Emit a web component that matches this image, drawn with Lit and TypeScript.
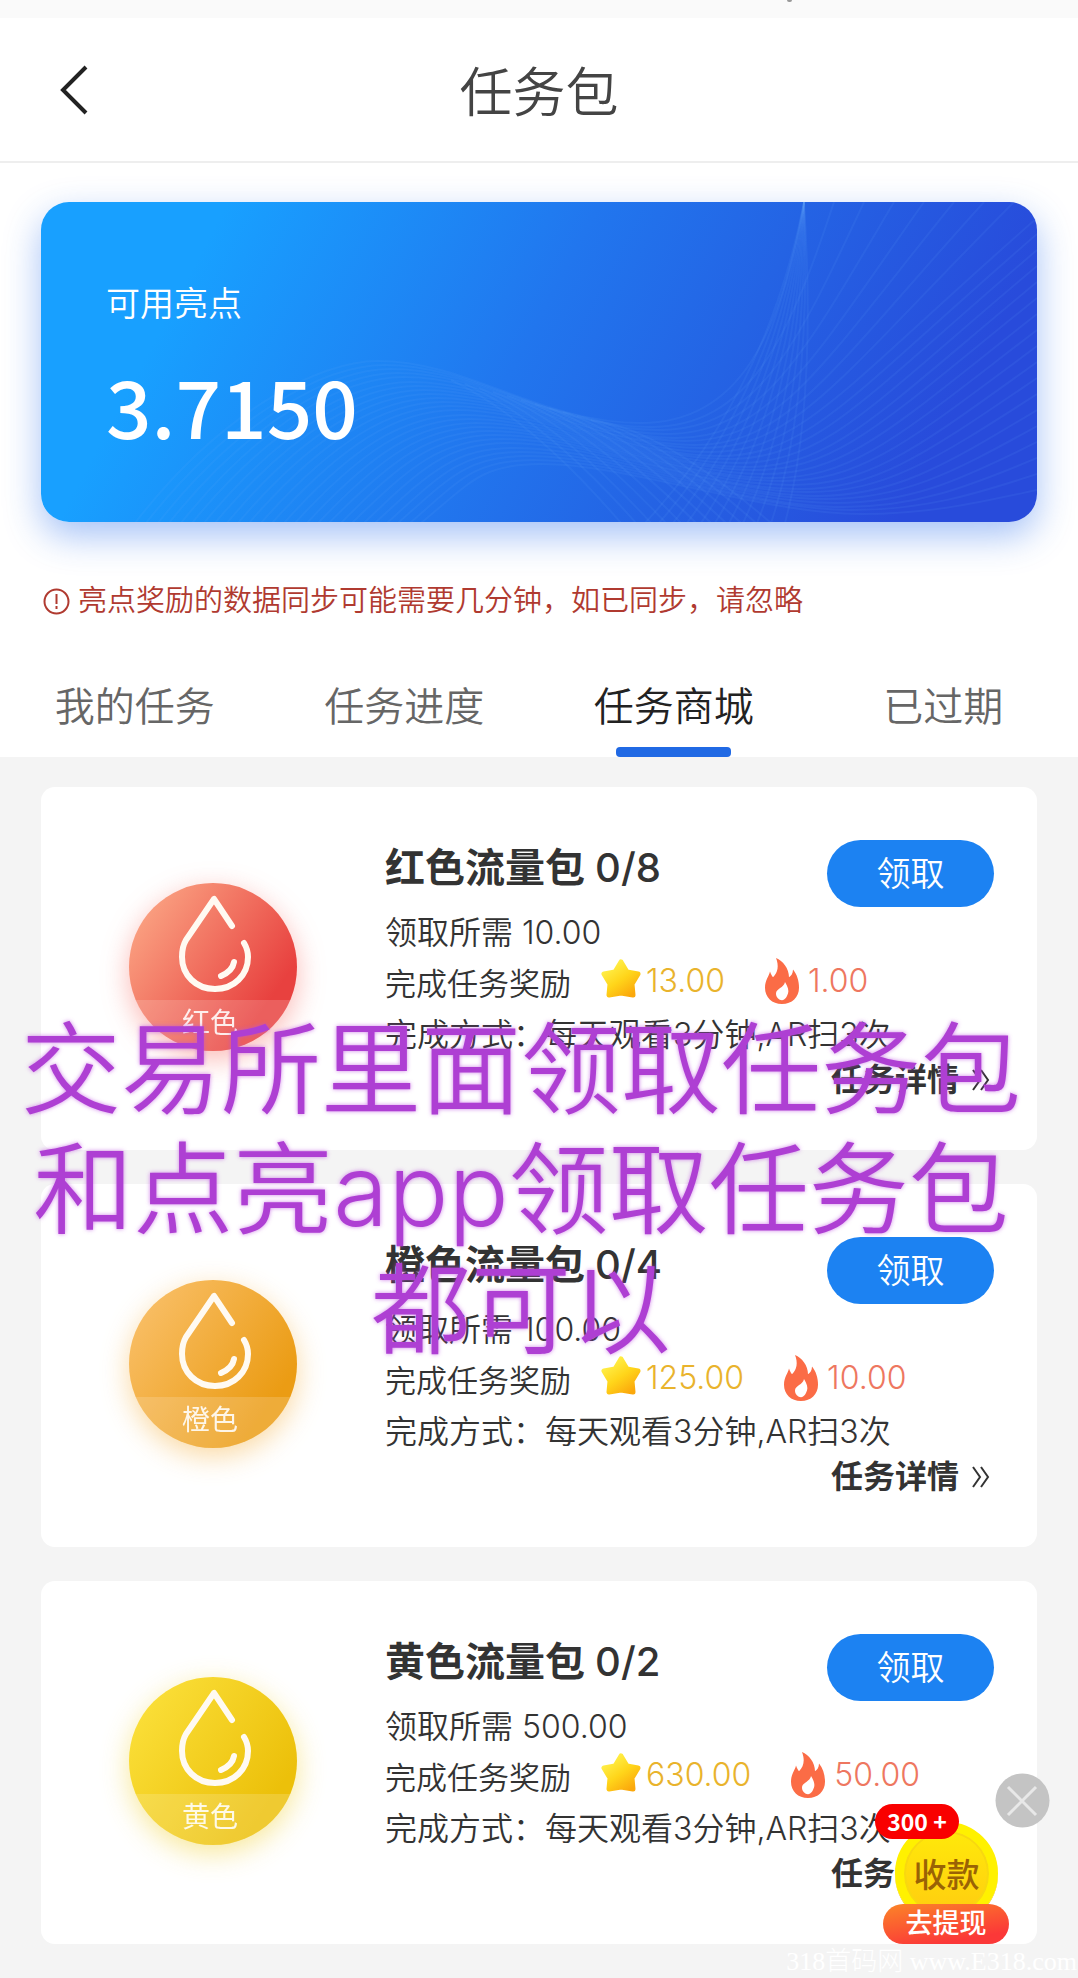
import { LitElement, html, css, svg } from "lit";
import { customElement, property, state } from "lit/decorators.js";
import { classMap } from "lit/directives/class-map.js";

interface TaskPack {
  id: string;
  color: string;
  progress: string;
  cost: string;
  stars: string;
  heat: string;
}

const PACKS: TaskPack[] = [
  { id: "red", color: "红色", progress: "0/8", cost: "10.00", stars: "13.00", heat: "1.00" },
  { id: "orange", color: "橙色", progress: "0/4", cost: "100.00", stars: "125.00", heat: "10.00" },
  { id: "yellow", color: "黄色", progress: "0/2", cost: "500.00", stars: "630.00", heat: "50.00" },
];

const TABS = ["我的任务", "任务进度", "任务商城", "已过期"];

const base = css`
  * {
    box-sizing: border-box;
  }
  button {
    margin: 0;
    padding: 0;
    border: 0;
    background: none;
    font: inherit;
    color: inherit;
    cursor: pointer;
  }
  a {
    color: inherit;
    text-decoration: none;
  }
  svg {
    display: block;
    flex: none;
  }
`;

/** Blue balance card with a fan of fine wave lines behind the amount. */
@customElement("balance-card")
export class BalanceCard extends LitElement {
  @property() amount = "";

  static styles = [
    base,
    css`
      :host {
        display: block;
      }
      .card {
        position: relative;
        height: 320px;
        padding: 78px 65px 0;
        border-radius: 28px;
        overflow: hidden;
        color: #fff;
        background: linear-gradient(118deg, #18a0ff 16%, #2176ee 48%, #2463e4 66%, #284bdb 88%);
      }
      .shade {
        border-radius: 28px;
        box-shadow: 0 14px 36px rgba(40, 110, 235, 0.42);
      }
      .waves {
        position: absolute;
        inset: 0;
        width: 100%;
        height: 100%;
      }
      .label,
      .amount {
        position: relative;
        margin: 0;
      }
      .label {
        font-size: 34px;
        line-height: 48px;
        font-weight: 350;
      }
      .amount {
        margin-top: 26px;
        font-family: "Noto Sans CJK SC", sans-serif;
        font-size: 80px;
        line-height: 100px;
        font-weight: 500;
      }
    `,
  ];

  private waves() {
    const n = 26;
    const mix = (a: number, b: number, t: number) => Math.round(a + (b - a) * t);
    const sweeps = Array.from({ length: n }, (_, i) => {
      const t = i / (n - 1);
      const hx = mix(337, 500, t);
      const hy = mix(159, 262, t);
      const vx = mix(600, 820, t);
      const vy = mix(221, 312, t);
      const ex = Math.min(996, 763 + i * 30);
      const ey = Math.max(0, i - 7) * 16;
      return `M${mix(94, 380, t)} 321 C${mix(180, 430, t)} ${mix(210, 280, t)} ${hx - 60} ${hy} ${hx} ${hy} C${hx + 90} ${hy} ${vx - 100} ${vy} ${vx} ${vy} C${vx + mix(100, 70, t)} ${vy} ${mix(740, 940, t)} ${mix(130, 300, t)} ${ex} ${ey}`;
    });
    const falls = Array.from(
      { length: 11 },
      (_, i) => `M${410 + i * 14} ${178 + i * 4} Q${490 + i * 13} ${216 + i} ${580 + i * 15} 321`
    );
    const risers = Array.from({ length: 11 }, (_, i) => `M${604 + i * 14} 321 Q${726 + i * 5} ${190 + i} 763 0`);
    return [...sweeps, ...falls, ...risers];
  }

  render() {
    return html`<div class="shade">
      <section class="card">
        <svg class="waves" viewBox="0 0 996 320" preserveAspectRatio="none" aria-hidden="true">
          ${this.waves().map((d) => svg`<path d=${d} fill="none" stroke="#6fb0ff" stroke-opacity=".09" stroke-width="2"/>`)}
        </svg>
        <p class="label">可用亮点</p>
        <p class="amount">${this.amount}</p>
      </section>
    </div>`;
  }
}

/** One traffic pack: coloured drop badge, costs, rewards and actions. */
@customElement("task-pack")
export class TaskPackCard extends LitElement {
  @property({ attribute: false }) pack!: TaskPack;

  static styles = [
    base,
    css`
      :host {
        display: block;
      }
      .card {
        display: flex;
        gap: 88px;
        min-height: 363px;
        padding: 53px 43px 0 88px;
        border-radius: 14px;
        background: #fff;
      }
      .badge {
        flex: none;
        width: 168px;
        height: 168px;
        margin-top: 43px;
        border-radius: 50%;
        overflow: hidden;
        display: flex;
        flex-direction: column;
        color: #fff;
      }
      .glow {
        flex: none;
        align-self: flex-start;
      }
      .red .badge {
        background: linear-gradient(125deg, #fba584 8%, #e8413f 78%);
      }
      .orange .badge {
        background: linear-gradient(125deg, #f9bf68 8%, #eb9c14 80%);
      }
      .yellow .badge {
        background: linear-gradient(125deg, #fbe03a 8%, #ecc00a 80%);
      }
      .red .glow {
        filter: drop-shadow(0 8px 14px rgba(245, 80, 70, 0.4));
      }
      .orange .glow {
        filter: drop-shadow(0 8px 14px rgba(245, 170, 50, 0.45));
      }
      .yellow .glow {
        filter: drop-shadow(0 8px 14px rgba(240, 205, 30, 0.45));
      }
      .tone {
        flex: 1;
        padding-right: 6px;
        font-size: 28px;
        line-height: 46px;
        text-align: center;
        color: rgba(255, 255, 255, 0.88);
        background: rgba(255, 255, 255, 0.16);
      }
      .body {
        flex: 1;
        min-width: 0;
        color: #333;
        font-size: 32px;
        line-height: 51px;
        font-weight: 350;
      }
      .head {
        display: flex;
        justify-content: space-between;
        align-items: flex-start;
        height: 67px;
      }
      .title {
        margin: 0;
        font-size: 40px;
        line-height: 56px;
        font-weight: 600;
      }
      .count {
        font-weight: 500;
      }
      .claim {
        width: 167px;
        height: 67px;
        border-radius: 34px;
        background: #1c82f2;
        color: #fff;
        font-size: 34px;
      }
      .line {
        margin: 0;
        height: 51px;
        white-space: nowrap;
      }
      .method {
        font-size: 31px;
      }
      .rewards {
        display: flex;
        align-items: flex-start;
      }
      .rewards .label {
        font-size: 31px;
      }
      .star {
        margin: 0 4px 0 29px;
      }
      .flame {
        margin: 0 9px 0 40px;
      }
      .stars,
      .heat {
        font-weight: 300;
        line-height: 46px;
      }
      .stars {
        color: #e9b32c;
      }
      .heat {
        color: #ee7760;
      }
      .more {
        display: flex;
        justify-content: flex-end;
        align-items: center;
        gap: 13px;
        padding-right: 4px;
        line-height: 40px;
        font-weight: 600;
      }
    `,
  ];

  render() {
    const p = this.pack;
    return html`<article class="card ${p.id}">
      <div class="glow">
        <div class="badge">
          <svg width="168" height="117" viewBox="0 0 168 117" fill="none" stroke="#fffaf2" stroke-width="6" stroke-linecap="round" stroke-linejoin="round" aria-hidden="true">
            <path d="M103 43 85 16 57 57C54 62 53 67 53 74c0 18 14 32 33 32s33-14 33-32c0-5-1-9-4-14" />
            <path d="M105 79c-1 6-6 11-13 14" />
          </svg>
          <span class="tone">${p.color}</span>
        </div>
      </div>
      <div class="body">
        <div class="head">
          <h2 class="title">${p.color}流量包 <span class="count">${p.progress}</span></h2>
          <button class="claim" type="button">领取</button>
        </div>
        <p class="line">领取所需 ${p.cost}</p>
        <p class="line rewards">
          <span class="label">完成任务奖励</span>
          <svg class="star" width="42" height="42" viewBox="0 0 42 42" aria-hidden="true">
            <defs>
              <linearGradient id="gold" x1=".15" y1=".1" x2=".8" y2="1">
                <stop offset="0" stop-color="#fff04a" />
                <stop offset=".5" stop-color="#ffd51a" />
                <stop offset="1" stop-color="#fba80c" />
              </linearGradient>
            </defs>
            <path d="M21 4 27 14 38 16 32 26 33 37 21 35 9 37 10 26 4 16 15 14Z" fill="url(#gold)" stroke="url(#gold)" stroke-width="5" stroke-linejoin="round" />
          </svg>
          <span class="stars">${p.stars}</span>
          <svg class="flame" width="34" height="46" viewBox="0 0 34 48" preserveAspectRatio="none" aria-hidden="true">
            <path fill="#fb6c46" d="M11 0C18 3 24 11 24 20c2-1 4-4 4-8 4 5 6 12 6 19 0 10-7 17-17 17S0 41 0 31c0-8 4-12 5-17 1 3 2 5 3 6 5-5 6-12 3-20Z" />
            <path fill="#fff" d="M20 25c3 5 4 9 3 12s-3 7-6 7-6-3-6-7c0-5 8-6 9-12Z" />
          </svg>
          <span class="heat">${p.heat}</span>
        </p>
        <p class="line">完成方式：每天观看3分钟,AR扫3次</p>
        <a class="more" href="#${p.id}">
          <span>任务详情</span>
          <svg width="18" height="22" viewBox="0 0 18 22" fill="none" stroke="#333" stroke-width="2" aria-hidden="true">
            <path d="m1 1 7 10-7 10M9 1l7 10-7 10" />
          </svg>
        </a>
      </div>
    </article>`;
  }
}

@customElement("app-root")
export class AppRoot extends LitElement {
  @state() private active = 2;

  static styles = [
    base,
    css`
      :host {
        display: block;
        position: relative;
        min-height: 100vh;
        overflow: hidden;
        background: #f4f4f4;
        font-family: Inter, "Noto Sans CJK SC", sans-serif;
        color: #333;
      }
      .status {
        height: 18px;
        background: #fafafa;
      }
      .status-mark {
        display: block;
        width: 5px;
        height: 2px;
        margin-left: 73%;
        border-radius: 0 0 2px 2px;
        background: #999;
      }
      .top {
        background: #fff;
      }
      .bar {
        display: grid;
        grid-template-columns: 120px 1fr 120px;
        align-items: center;
        height: 145px;
        border-bottom: 2px solid #eee;
      }
      .back {
        padding-left: 59px;
        height: 100%;
      }
      .bar h1 {
        margin: 0;
        padding-top: 6px;
        text-align: center;
        font-size: 53px;
        line-height: 72px;
        font-weight: 350;
        color: #444;
      }
      .balance {
        padding: 39px 41px 0;
      }
      .notice {
        display: flex;
        align-items: center;
        gap: 8px;
        margin: 0;
        padding: 59px 43px 0;
        font-size: 29px;
        line-height: 40px;
        font-weight: 350;
        color: #b03a30;
      }
      .tabs {
        display: grid;
        grid-template-columns: repeat(4, 1fr);
        margin-top: 38px;
      }
      .tab {
        display: flex;
        flex-direction: column;
        align-items: center;
        justify-content: space-between;
        height: 98px;
        padding-top: 20px;
        font-size: 40px;
        line-height: 56px;
        font-weight: 350;
        color: #666;
      }
      .tab.on {
        color: #222;
      }
      .tab.on::after {
        content: "";
        width: 115px;
        height: 10px;
        border-radius: 4px;
        background: #2069e4;
      }
      .list {
        display: grid;
        gap: 34px;
        padding: 30px 41px 34px;
      }
      .caption {
        position: absolute;
        top: 1010px;
        left: 0;
        right: 36px;
        margin: 0;
        text-align: center;
        white-space: nowrap;
        pointer-events: none;
        font-size: 100px;
        line-height: 120px;
        font-weight: 350;
        color: #ae3fd3;
        text-shadow: 0 0 4px rgba(190, 80, 225, 0.7);
      }
      .promo {
        position: absolute;
        right: 28px;
        bottom: 33px;
        width: 176px;
        height: 172px;
      }
      .close {
        position: absolute;
        right: 0;
        top: 0;
      }
      .coin {
        position: absolute;
        left: 21px;
        top: 49px;
        width: 103px;
        height: 103px;
        border: 9px solid #fff100;
        border-radius: 50%;
        background: linear-gradient(#ffe90a, #ffcc10);
        box-shadow: inset 0 0 0 2px #f8d810, 0 1px 0 #f1bd10;
        text-align: center;
        font-size: 33px;
        line-height: 88px;
        font-weight: 500;
        white-space: nowrap;
        color: #9a6205;
      }
      .pill {
        position: absolute;
        left: 1px;
        top: 31px;
        width: 84px;
        height: 35px;
        border-radius: 18px;
        background: #f90000;
        color: #fff;
        text-align: center;
        font-family: "Noto Sans CJK SC", sans-serif;
        font-size: 23px;
        line-height: 35px;
        font-weight: 700;
      }
      .cash {
        position: absolute;
        left: 9px;
        top: 131px;
        width: 126px;
        height: 40px;
        border-radius: 20px;
        background: linear-gradient(170deg, #fb8528, #fb3838 80%);
        color: #fff;
        font-size: 27px;
        line-height: 40px;
        text-align: center;
        font-weight: 500;
      }
      .mark {
        position: absolute;
        right: 1px;
        bottom: 0;
        margin: 0;
        font-family: "Liberation Serif", "Noto Sans CJK SC", serif;
        font-size: 26px;
        line-height: 32px;
        font-weight: 300;
        color: #fff;
      }
    `,
  ];

  render() {
    return html`
      <div class="status"><i class="status-mark"></i></div>
      <div class="top">
        <header class="bar">
          <button class="back" type="button" aria-label="返回">
            <svg width="30" height="50" viewBox="0 0 30 50" fill="none" stroke="#222" stroke-width="4" aria-hidden="true">
              <path d="M27 2 4 25l23 23" />
            </svg>
          </button>
          <h1>任务包</h1>
        </header>
        <div class="balance"><balance-card amount="3.7150"></balance-card></div>
        <p class="notice">
          <svg width="27" height="27" viewBox="0 0 27 27" fill="none" stroke="#b03a30" stroke-width="2" aria-hidden="true">
            <circle cx="13.5" cy="13.5" r="12" />
            <path d="M13.5 6v10M13.5 18v3" />
          </svg>
          <span>亮点奖励的数据同步可能需要几分钟，如已同步，请忽略</span>
        </p>
        <nav class="tabs">
          ${TABS.map(
            (name, i) => html`<button
              type="button"
              class=${classMap({ tab: true, on: i === this.active })}
              @click=${() => (this.active = i)}
            ><span>${name}</span></button>`
          )}
        </nav>
      </div>
      <main class="list">${PACKS.map((p) => html`<task-pack .pack=${p}></task-pack>`)}</main>
      <p class="caption">交易所里面领取任务包<br />和点亮app领取任务包<br />都可以</p>
      <aside class="promo">
        <button class="close" type="button" aria-label="关闭">
          <svg width="55" height="55" viewBox="0 0 55 55" aria-hidden="true">
            <circle cx="27.5" cy="27.5" r="27" fill="#bfbfbf" fill-opacity=".92" />
            <path d="m13 14 28 28M41 14 13 42" stroke="#e8e8e8" stroke-width="3" />
          </svg>
        </button>
        <div class="coin">收款</div>
        <div class="pill">300 +</div>
        <button class="cash" type="button">去提现</button>
      </aside>
      <p class="mark">318首码网 www.E318.com</p>
    `;
  }
}
